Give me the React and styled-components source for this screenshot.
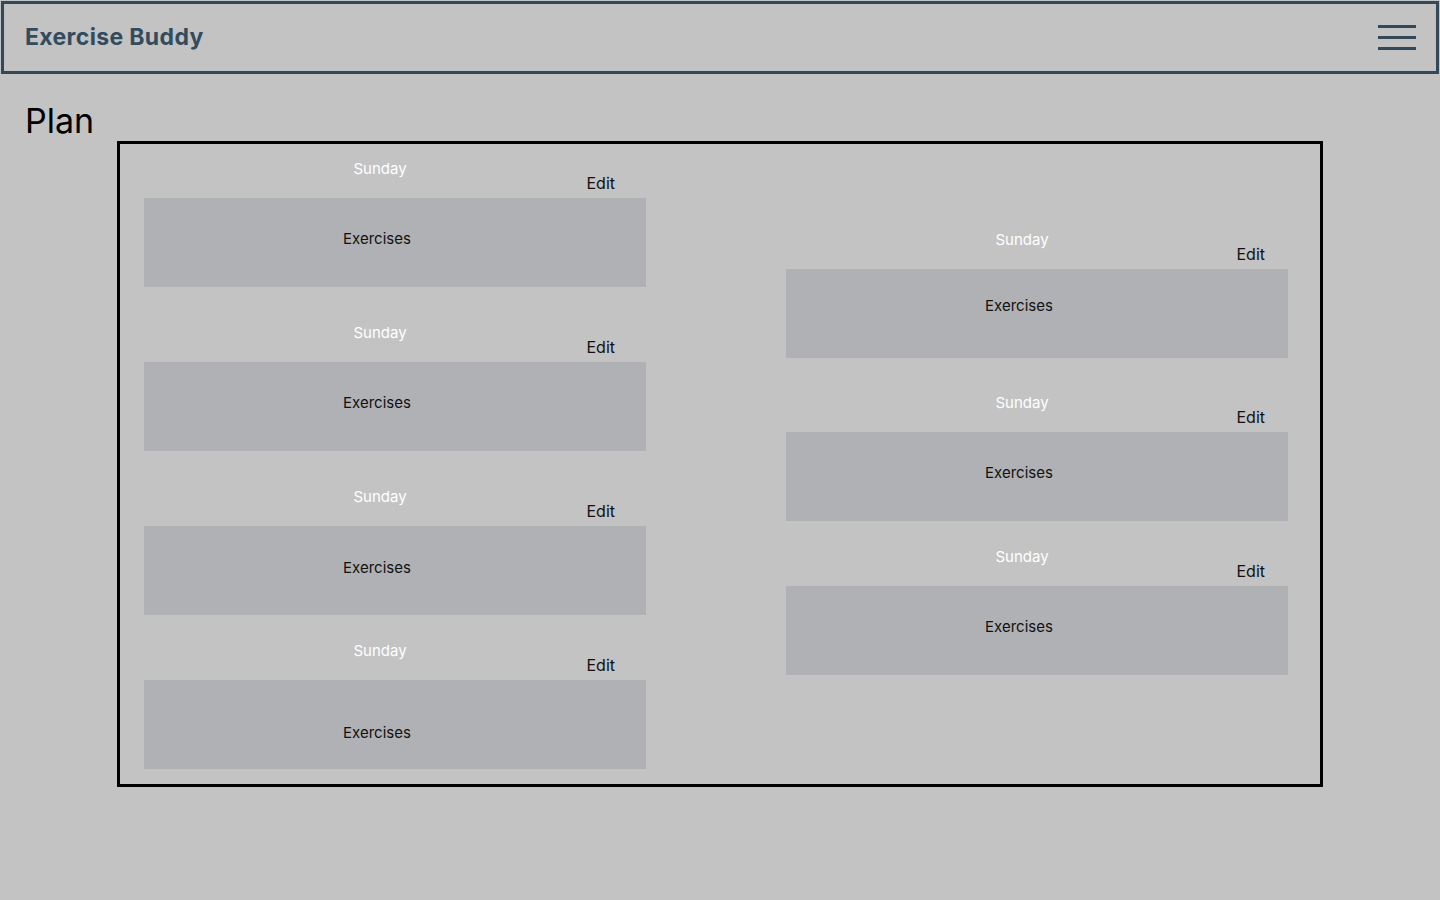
import React from 'react';
import styled, { createGlobalStyle } from 'styled-components';

const GlobalStyle = createGlobalStyle`
	html, body {
		margin: 0;
		padding: 0;
		background: #c3c3c3;
		font-family: Inter, 'Liberation Sans', sans-serif;
	}
	body {
		min-height: 900px;
	}
`;

const Header = styled.header`
	display: flex;
	align-items: center;
	justify-content: space-between;
	height: 73px;
	margin: 1px 1px 0 1px;
	padding: 0 20px 2px 21px;
	border: 3px solid #33495a;
	box-sizing: border-box;
`;
const Brand = styled.span`
	font-size: 23px;
	font-weight: 700;
	color: #334b5e;
	letter-spacing: 0.35px;
`;
const Burger = styled.button`
	display: flex;
	flex-direction: column;
	gap: 8px;
	margin-top: 2px;
	padding: 0;
	border: none;
	background: none;
	cursor: pointer;
	span {
		display: block;
		width: 38px;
		height: 3px;
		background: #33495a;
	}
`;
const Title = styled.h1`
	margin: 27px 0 0 25px;
	font-size: 34px;
	font-weight: 400;
	line-height: 40px;
	color: #000;
`;
const Board = styled.section`
	display: grid;
	grid-template-columns: 502px 502px;
	column-gap: 140px;
	align-items: start;
	width: 1206px;
	margin-left: 117px;
	padding: 16px 32px 15px 24px;
	border: 3px solid #000;
	box-sizing: border-box;
`;
const Column = styled.div`
	display: flex;
	flex-direction: column;
	padding-top: ${(p) => p.$offset}px;
`;
const Day = styled.div`
	margin-top: ${(p) => p.$gap}px;
`;
const DayName = styled.div`
	height: 16px;
	padding-top: 1px;
	line-height: 16px;
	padding-right: 30px;
	text-align: center;
	font-size: 15px;
	color: #fff;
	box-sizing: border-box;
`;
const EditRow = styled.div`
	display: flex;
	justify-content: flex-end;
	height: 14px;
	padding-right: ${(p) => p.$right}px;
`;
const Edit = styled.button`
	padding: 0;
	border: none;
	background: none;
	font-family: inherit;
	font-size: 16px;
	line-height: 14px;
	color: #111;
	cursor: pointer;
`;
const Exercises = styled.div`
	display: flex;
	align-items: center;
	justify-content: center;
	height: 89px;
	margin-top: 8px;
	padding-right: 36px;
	padding-top: ${(p) => (p.$shift > 0 ? 2 * p.$shift : 0)}px;
	padding-bottom: ${(p) => (p.$shift < 0 ? 2 * -p.$shift : 0)}px;
	box-sizing: border-box;
	background: #b0b1b4;
	font-size: 15px;
	color: #111;
`;

const left = [
	{ gap: 0, edit: 31, shift: -4 },
	{ gap: 37, edit: 31, shift: -4 },
	{ gap: 37, edit: 31, shift: -3 },
	{ gap: 27, edit: 31, shift: 8 },
];
const right = [
	{ gap: 0, edit: 23, shift: -8 },
	{ gap: 36, edit: 23, shift: -4 },
	{ gap: 27, edit: 23, shift: -4 },
];

const DayCard = ({ gap, edit, shift }) => (
	<Day $gap={gap}>
		<DayName>Sunday</DayName>
		<EditRow $right={edit}>
			<Edit>Edit</Edit>
		</EditRow>
		<Exercises $shift={shift}>Exercises</Exercises>
	</Day>
);

const App = () => (
	<>
		<GlobalStyle />
		<Header>
			<Brand>Exercise Buddy</Brand>
			<Burger aria-label="menu">
				<span />
				<span />
				<span />
			</Burger>
		</Header>
		<Title>Plan</Title>
		<Board>
			<Column $offset={0}>
				{left.map((d, i) => (
					<DayCard key={i} {...d} />
				))}
			</Column>
			<Column $offset={71}>
				{right.map((d, i) => (
					<DayCard key={i} {...d} />
				))}
			</Column>
		</Board>
	</>
);

export default App;
